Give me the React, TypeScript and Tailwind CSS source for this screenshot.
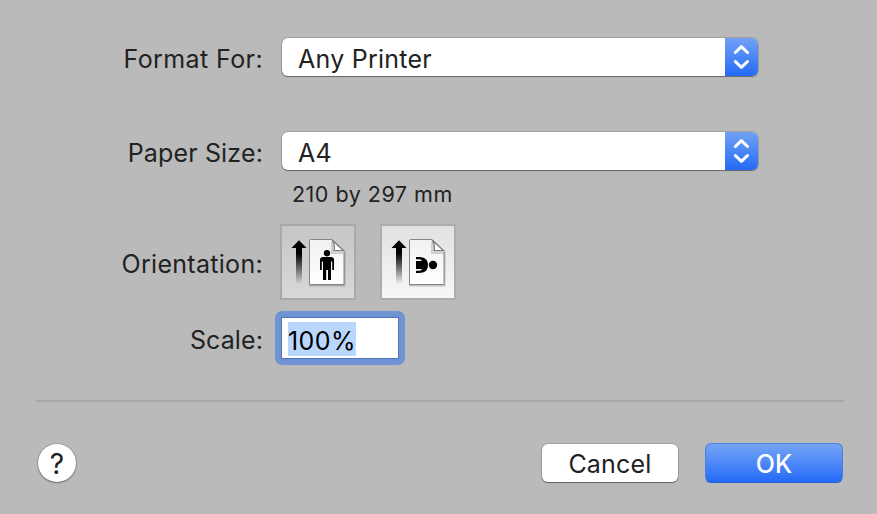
import type { ReactNode } from "react";

const selectShadow = "shadow-[0_0_0_1px_rgba(0,0,0,0.14),0_1px_1px_rgba(0,0,0,0.35)]";

function Row({ label, className, spacing = "tracking-[0.3px]", children }: { label: string; className: string; spacing?: string; children: ReactNode }) {
  return (
    <div className={`flex items-center ${className}`}>
      <span className={`-mr-px w-[263px] pt-[3px] text-right whitespace-nowrap ${spacing}`}>{label}</span>
      {children}
    </div>
  );
}

function Select({ value }: { value: string }) {
  return (
    <button className={`ml-5 flex h-[38px] w-[476px] items-center overflow-hidden rounded-[6px] bg-white text-left ${selectShadow}`}>
      <span className="flex-1 pt-[3px] pl-4 tracking-[0.25px]">{value}</span>
      <span className="flex h-full w-[33px] items-center justify-center bg-gradient-to-b from-[#71a1f4] to-[#2369f6]">
        <svg width="33" height="38" viewBox="0 0 33 38" fill="none" stroke="white" strokeWidth="3" strokeLinecap="round" strokeLinejoin="round">
          <path d="M10.3 14.5L16.4 8.7L22.5 14.5M10.3 23.5L16.4 29.3L22.5 23.5" />
        </svg>
      </span>
    </button>
  );
}

function OrientationIcon({ landscape = false }: { landscape?: boolean }) {
  const id = landscape ? "land" : "port";
  return (
    <svg width="72" height="72" viewBox="2 2 72 72">
      <defs>
        <linearGradient id={`${id}-arrow`} x1="0" y1="16" x2="0" y2="60" gradientUnits="userSpaceOnUse">
          <stop offset="0.3" />
          <stop offset="1" stopOpacity="0" />
        </linearGradient>
        <linearGradient id={`${id}-page`} x1="0" y1="0" x2="0" y2="1">
          <stop stopColor="#f1f1f1" />
          <stop offset="1" stopColor="#fff" />
        </linearGradient>
      </defs>
      <path d="M19 16.3L26.5 24H22V61H16V24H11.5Z" fill={`url(#${id}-arrow)`} />
      <path d="M30 18V61.5H64.5V28" fill="none" stroke="#000" strokeOpacity=".2" strokeWidth="2" />
      <path d="M30.5 15.5H52L64 27.5V60.5H29.5V16.5Q29.5 15.5 30.5 15.5Z" fill={`url(#${id}-page)`} stroke="#858585" />
      <path d="M52.5 18V28.5H63" fill="none" stroke="#000" strokeOpacity=".15" strokeWidth="3" />
      <path d="M52 16Q55 20 54.3 26.5H63.5Z" fill="#fff" stroke="#7c7c7c" strokeWidth="1.2" />
      {landscape ? (
        <g>
          <circle cx="53" cy="41" r="4.2" />
          <path d="M36 33H39C45 33 48 36 48 41S45 49 39 49H36V46.7H39.5Q41.5 46.5 42 45H36V37H42Q41.5 35.5 39.5 35.3H36Z" />
        </g>
      ) : (
        <g>
          <circle cx="47" cy="29.2" r="3.2" />
          <path d="M43 33H51Q54 33 54 36V46H52.2V37.5H51V56H48V46H46.2V56H43V37.5H41.8V46H40V36Q40 33 43 33Z" />
        </g>
      )}
    </svg>
  );
}

export default function App() {
  return (
    <main className="flex h-[514px] w-[877px] flex-col overflow-hidden bg-[#bababa] pt-[38px] font-['Inter','Liberation_Sans',sans-serif] text-[25px] leading-[38px] text-[#222]">
      <Row label="Format For:" className="h-[38px]" spacing="tracking-[0.4px]">
        <Select value="Any Printer" />
      </Row>
      <Row label="Paper Size:" className="mt-14 h-[38px]" spacing="tracking-[0.15px]">
        <Select value="A4" />
      </Row>
      <div className="mt-[9px] h-[30px] pl-[292px] text-[21.5px] leading-[30px] tracking-[0.5px]">210 by 297 mm</div>
      <Row label="Orientation:" className="mt-[15px] h-[76px]">
        <div className="ml-[18px] flex gap-6">
          <button className="size-[76px] border-2 border-[#a9a9a9] bg-gradient-to-b from-[#c6c6c6] to-[#d8d8d8]">
            <OrientationIcon />
          </button>
          <button className="size-[76px] border-2 border-[#adadad] bg-gradient-to-b from-[#e1e1e1] to-[#f7f7f7]">
            <OrientationIcon landscape />
          </button>
        </div>
      </Row>
      <Row label="Scale:" className="mt-[11px] h-[54px]" spacing="tracking-[0.1px]">
        <div className="ml-[13px] h-[54px] w-[130px] rounded-[7px] bg-[#7094d3] p-[6px]">
          <div className="flex h-[42px] border border-[#4e74b9] bg-white pt-1 pl-[6px]">
            <span className="h-[34px] w-[68px] bg-[#b9d7fc] leading-[38px] tracking-[0.4px] whitespace-nowrap text-black">100%</span>
          </div>
        </div>
      </Row>
      <hr className="mr-[33px] ml-9 mt-[35px] h-[2px] border-0 bg-[#a7a7a7]" />
      <footer className="mt-[41px] flex h-10 items-center pr-[34px] pl-[38px]">
        <button className="flex size-[38px] items-center justify-center rounded-full bg-white pt-px text-[28px] shadow-[0_0_0_1px_rgba(0,0,0,0.12),0_1px_2px_rgba(0,0,0,0.35)]">
          ?
        </button>
        <button className={`ml-auto h-[38px] w-[136px] rounded-[6px] bg-white pt-px tracking-[0.2px] ${selectShadow}`}>Cancel</button>
        <button className="ml-[27px] h-10 w-[138px] rounded-[6px] border border-[#4b80df] border-b-[#2960cd] bg-gradient-to-b from-[#75a4f5] to-[#2269f6] pt-px font-medium text-white">
          OK
        </button>
      </footer>
    </main>
  );
}
